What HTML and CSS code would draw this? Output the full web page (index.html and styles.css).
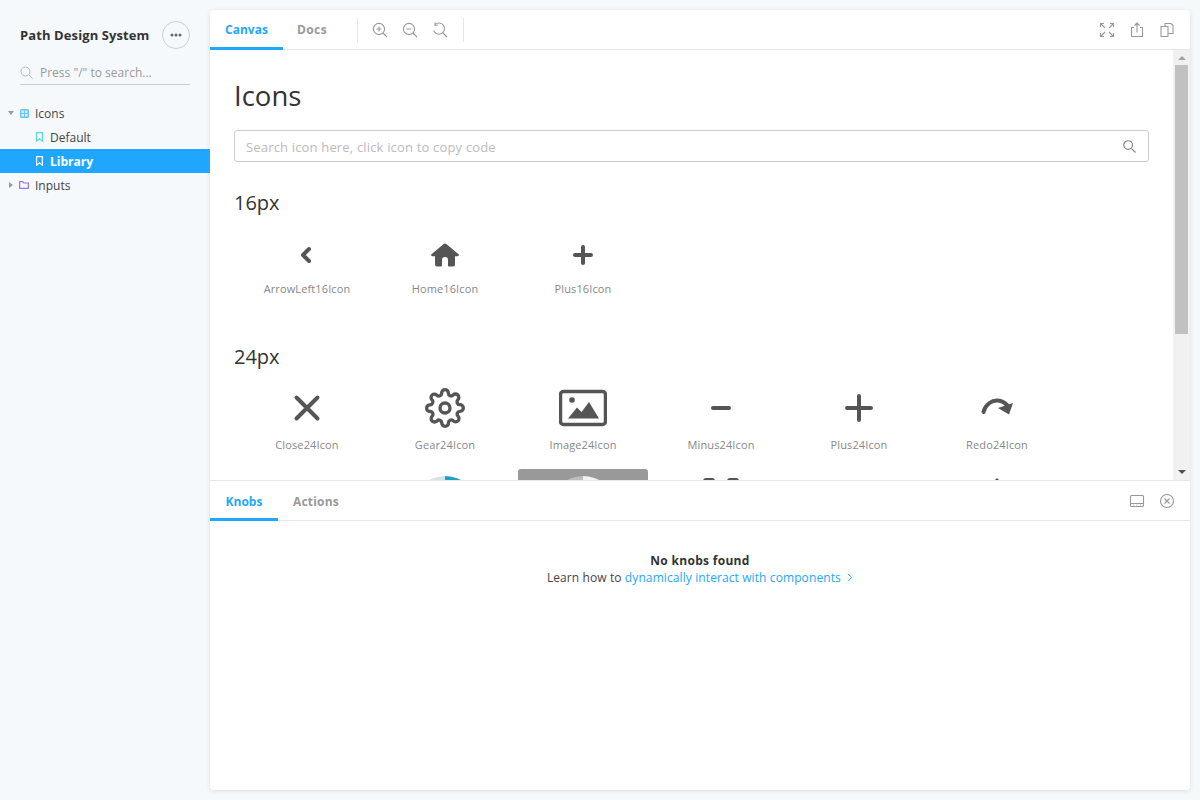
FILE: index.html
```html
<!DOCTYPE html>
<html lang="en">
<head>
    <meta charset="UTF-8">
    <meta name="viewport" content="width=device-width, initial-scale=1.0">
    <title>Path Design System</title>
    <link rel="stylesheet" href="styles.css">
</head>
<body>
    <aside class="sidebar">
        <div class="brand">
            <span class="brand-name">Path Design System</span>
            <button class="menu-btn" aria-label="menu">
                <svg width="12" height="4" viewBox="0 0 12 4"><circle cx="2" cy="2" r="1.5"/><circle cx="6" cy="2" r="1.5"/><circle cx="10" cy="2" r="1.5"/></svg>
            </button>
        </div>
        <div class="side-search">
            <svg width="13" height="13" viewBox="0 0 13 13" fill="none" stroke="#b5b5b5" stroke-width="1"><circle cx="5.5" cy="5.5" r="4.5"/><path d="M9 9l3.5 3.5"/></svg>
            <span>Press "/" to search...</span>
        </div>
        <ul class="tree">
            <li class="tree-item">
                <span class="caret caret-down"></span>
                <svg class="tree-icon" width="9" height="9" viewBox="0 0 9 9"><rect width="9" height="9" rx="1.500" fill="#6cc4f7"/><path d="M1.500 1.500h2.500v2.500h-2.500zM5 1.500h2.500v2.500H5zM1.500 5h2.500v2.500h-2.500zM5 5h2.500v2.500H5z" fill="#d9f0fe"/></svg>
                Icons
            </li>
            <li class="tree-item tree-child">
                <svg class="tree-icon" width="7" height="10" viewBox="0 0 7 10" fill="none" stroke="#5ad8d6" stroke-width="1.200"><path d="M.6.6h5.800v8.600L3.500 6.800.6 9.200z"/></svg>
                Default
            </li>
            <li class="tree-item tree-child is-active">
                <svg class="tree-icon" width="7" height="10" viewBox="0 0 7 10" fill="none" stroke="#fff" stroke-width="1.200"><path d="M.6.6h5.800v8.600L3.500 6.800.6 9.200z"/></svg>
                Library
            </li>
            <li class="tree-item tree-folder">
                <span class="caret caret-right"></span>
                <svg class="tree-icon" width="10" height="8" viewBox="0 0 10 8" fill="none" stroke="#9a78dc" stroke-width="1.200"><path d="M.6.6h3.200l1 1.400h4.600v5.400H.6z"/></svg>
                Inputs
            </li>
        </ul>
    </aside>

    <main class="card">
        <header class="bar">
            <div class="tab is-current tab-canvas">Canvas</div>
            <div class="tab tab-docs">Docs</div>
            <span class="bar-sep"></span>
            <div class="tools">
                <svg width="16" height="16" viewBox="0 0 16 16" class="ico"><circle cx="7" cy="7" r="5.6"/><path d="M11 11l4 4M4.500 7h5M7 4.500v5"/></svg>
                <svg width="16" height="16" viewBox="0 0 16 16" class="ico"><circle cx="7" cy="7" r="5.6"/><path d="M11 11l4 4M4.500 7h5"/></svg>
                <svg width="16" height="16" viewBox="0 0 16 16" class="ico"><path d="M3 2.600A5.600 5.600 0 1 1 1.600 8.400M3 .6v2.600h2.600M11 11l4 4"/></svg>
            </div>
            <span class="bar-sep"></span>
            <div class="bar-right">
                <svg width="16" height="16" viewBox="0 0 16 16" class="ico"><path d="M2 2l4 4M14 2l-4 4M2 14l4-4M14 14l-4-4M1.500 5V1.500H5M11 1.500h3.500V5M1.500 11v3.500H5M11 14.500h3.500V11"/></svg>
                <svg width="16" height="16" viewBox="0 0 16 16" class="ico"><path d="M5 5.500H2.500v9h11v-9H11M8 10.500V1M5.500 3.500L8 1l2.500 2.500"/></svg>
                <svg width="16" height="16" viewBox="0 0 16 16" class="ico"><path d="M2 4.500h7v10H2zM6 4.500V1.500h6l2 2v8h-5"/></svg>
            </div>
        </header>

        <div class="preview">
            <div class="canvas">
                <h1>Icons</h1>
                <div class="icon-search">
                    <span>Search icon here, click icon to copy code</span>
                    <svg width="13" height="13" viewBox="0 0 14 14" fill="none" stroke="#888" stroke-width="1.300"><circle cx="5.500" cy="5.500" r="4.700"/><path d="M9 9l4.500 4.500"/></svg>
                </div>

                <h2>16px</h2>
                <div class="icon-grid grid-small">
                    <div class="tile">
                        <div class="tile-icon"><svg width="32" height="32" viewBox="0 0 32 32" fill="none" stroke="#555" stroke-width="4" stroke-linecap="round" stroke-linejoin="round"><path d="M18 10l-6 6 6 6"/></svg></div>
                        <div class="tile-label">ArrowLeft16Icon</div>
                    </div>
                    <div class="tile">
                        <div class="tile-icon"><svg width="32" height="32" viewBox="0 0 32 32" fill="#555"><path d="M16 4.500a2 2 0 0 1 1.300.5l12 10a1.200 1.200 0 0 1-.8 2.200H26v8.300a2 2 0 0 1-2 2h-4a1 1 0 0 1-1-1V21a3 3 0 0 0-6 0v5.500a1 1 0 0 1-1 1H8a2 2 0 0 1-2-2v-8.300H3.500a1.200 1.200 0 0 1-.8-2.200l12-10a2 2 0 0 1 1.300-.5z"/></svg></div>
                        <div class="tile-label">Home16Icon</div>
                    </div>
                    <div class="tile">
                        <div class="tile-icon"><svg width="32" height="32" viewBox="0 0 32 32" fill="none" stroke="#555" stroke-width="4" stroke-linecap="round"><path d="M16 8v16M8 16h16"/></svg></div>
                        <div class="tile-label">Plus16Icon</div>
                    </div>
                </div>

                <h2>24px</h2>
                <div class="icon-grid grid-large">
                    <div class="tile">
                        <div class="tile-icon"><svg width="48" height="48" viewBox="0 0 48 48" fill="none" stroke="#555" stroke-width="4" stroke-linecap="round"><path d="M13.500 13.500l21 21M34.500 13.500l-21 21"/></svg></div>
                        <div class="tile-label">Close24Icon</div>
                    </div>
                    <div class="tile">
                        <div class="tile-icon"><svg width="40" height="40" viewBox="0 0 24 24" fill="none" stroke="#555" stroke-width="2" stroke-linejoin="round"><circle cx="12" cy="12" r="3"/><path d="M19.400 15a1.650 1.650 0 0 0 .33 1.820l.06.06a2 2 0 0 1 0 2.830 2 2 0 0 1-2.830 0l-.06-.06a1.650 1.650 0 0 0-1.820-.33 1.650 1.650 0 0 0-1 1.510V21a2 2 0 0 1-2 2 2 2 0 0 1-2-2v-.09A1.650 1.650 0 0 0 9 19.400a1.650 1.650 0 0 0-1.820.33l-.06.06a2 2 0 0 1-2.830 0 2 2 0 0 1 0-2.830l.06-.06a1.650 1.650 0 0 0 .33-1.820 1.650 1.650 0 0 0-1.510-1H3a2 2 0 0 1-2-2 2 2 0 0 1 2-2h.09A1.650 1.650 0 0 0 4.600 9a1.650 1.650 0 0 0-.33-1.820l-.06-.06a2 2 0 0 1 0-2.830 2 2 0 0 1 2.830 0l.06.06a1.650 1.650 0 0 0 1.820.33H9a1.650 1.650 0 0 0 1-1.510V3a2 2 0 0 1 2-2 2 2 0 0 1 2 2v.09a1.650 1.650 0 0 0 1 1.510 1.650 1.650 0 0 0 1.820-.33l.06-.06a2 2 0 0 1 2.830 0 2 2 0 0 1 0 2.830l-.06.06a1.650 1.650 0 0 0-.33 1.820V9a1.650 1.650 0 0 0 1.510 1H21a2 2 0 0 1 2 2 2 2 0 0 1-2 2h-.09a1.650 1.650 0 0 0-1.510 1z"/></svg></div>
                        <div class="tile-label">Gear24Icon</div>
                    </div>
                    <div class="tile">
                        <div class="tile-icon"><svg width="48" height="48" viewBox="0 0 48 48"><rect x="1.500" y="7.500" width="45" height="33" rx="3" fill="none" stroke="#555" stroke-width="3.500"/><circle cx="13" cy="16" r="2.800" fill="#555"/><path d="M9 34.500l9-11 4.500 4.500 7.500-10 10 16.500z" fill="#555"/></svg></div>
                        <div class="tile-label">Image24Icon</div>
                    </div>
                    <div class="tile">
                        <div class="tile-icon"><svg width="48" height="48" viewBox="0 0 48 48" fill="none" stroke="#555" stroke-width="4" stroke-linecap="round"><path d="M16 24h16"/></svg></div>
                        <div class="tile-label">Minus24Icon</div>
                    </div>
                    <div class="tile">
                        <div class="tile-icon"><svg width="48" height="48" viewBox="0 0 48 48" fill="none" stroke="#555" stroke-width="4" stroke-linecap="round"><path d="M24 12v24M12 24h24"/></svg></div>
                        <div class="tile-label">Plus24Icon</div>
                    </div>
                    <div class="tile">
                        <div class="tile-icon"><svg width="48" height="48" viewBox="0 0 48 48"><path d="M10.500 28C12.500 20 19 16.500 24 16.500c4 0 7 1.500 10 4.500" fill="none" stroke="#555" stroke-width="4" stroke-linecap="round"/><path d="M40 19l-4 11.500-11-6.500z" fill="#555"/></svg></div>
                        <div class="tile-label">Redo24Icon</div>
                    </div>

                    <div class="tile"></div>
                    <div class="tile">
                        <div class="tile-icon"><svg width="68" height="68" viewBox="0 0 68 68"><circle cx="34" cy="34" r="33" fill="#d6e4e8"/><path d="M34 34V1a33 33 0 0 1 33 33z" fill="#1ea0c4"/></svg></div>
                    </div>
                    <div class="tile is-picked">
                        <div class="tile-icon"><svg width="68" height="68" viewBox="0 0 68 68"><circle cx="34" cy="34" r="33" fill="#bdbdbd"/><path d="M34 34V1a33 33 0 0 1 33 33z" fill="#f2f2f2"/></svg></div>
                    </div>
                    <div class="tile">
                        <div class="tile-icon"><svg width="48" height="62" viewBox="0 0 48 62" fill="#555"><rect x="6" y="0" width="12" height="13" rx="3"/><rect x="30" y="0" width="12" height="13" rx="3"/></svg></div>
                    </div>
                    <div class="tile"></div>
                    <div class="tile">
                        <div class="tile-icon"><svg width="48" height="62" viewBox="0 0 48 62" fill="#555"><path d="M24 0l5 5H19z"/></svg></div>
                    </div>
                </div>
            </div>
            <div class="scrollbar">
                <span class="arrow arrow-up"></span>
                <span class="thumb"></span>
                <span class="track-rest"></span>
                <span class="arrow arrow-down"></span>
            </div>
        </div>

        <section class="addons">
            <header class="bar">
                <div class="tab is-current tab-knobs">Knobs</div>
                <div class="tab tab-actions">Actions</div>
                <div class="bar-right">
                    <svg width="16" height="16" viewBox="0 0 16 16" class="ico"><rect x="1.500" y="2.500" width="13" height="11" rx="1"/><path d="M1.500 10.500h13M4 12h1M7.500 12h1M11 12h1"/></svg>
                    <svg width="16" height="16" viewBox="0 0 16 16" class="ico"><circle cx="8" cy="8" r="6.500"/><path d="M5.500 5.500l5 5M10.500 5.500l-5 5"/></svg>
                </div>
            </header>
            <div class="empty">
                <strong>No knobs found</strong>
                <p>Learn how to <a href="#">dynamically interact with components <svg width="6" height="9" viewBox="0 0 6 9" fill="none" stroke="#1ea7fd" stroke-width="1"><path d="M1 .8l3.700 3.700L1 8.200"/></svg></a></p>
            </div>
        </section>
    </main>
</body>
</html>
```
FILE: styles.css
```css
* {
    box-sizing: border-box;
}
body {
    margin: 0;
    height: 800px;
    overflow: hidden;
    display: flex;
    padding: 10px 10px 10px 0;
    background-color: #f6f9fc;
    font-family: "Open Sans", "Noto Sans", sans-serif;
    color: #333;
}
.sidebar {
    width: 210px;
    flex-shrink: 0;
    padding-top: 11px;
}
.brand {
    display: flex;
    align-items: center;
    justify-content: space-between;
    padding: 0 20px;
    height: 27px;
}
.brand-name {
    font-size: 13px;
    font-weight: 700;
    letter-spacing: 0.1px;
    color: #333;
    white-space: nowrap;
}
.menu-btn {
    width: 28px;
    height: 28px;
    padding: 0;
    border: 1px solid #ccc;
    border-radius: 50%;
    background: transparent;
    display: flex;
    align-items: center;
    justify-content: center;
}
.menu-btn svg {
    fill: #666;
}
.side-search {
    display: flex;
    align-items: center;
    gap: 7px;
    margin: 11px 20px 0;
    height: 26px;
    padding-top: 1px;
    border-bottom: 1px solid #ccc;
    font-size: 12px;
    color: #999;
}
.tree {
    list-style: none;
    margin: 16px 0 0;
    padding: 0;
}
.tree-item {
    position: relative;
    display: flex;
    align-items: center;
    gap: 6px;
    height: 24px;
    padding-left: 20px;
    font-size: 12px;
    color: #444;
}
.tree-child {
    padding-left: 36px;
    gap: 7px;
}
.tree-folder {
    padding-left: 19px;
}
.tree-item.is-active {
    background-color: #1ea7fd;
    color: #fff;
    font-weight: 700;
}
.caret {
    position: absolute;
    left: 8px;
    top: 9px;
    width: 0;
    height: 0;
}
.caret-down {
    border-left: 3.500px solid transparent;
    border-right: 3.500px solid transparent;
    border-top: 4px solid #999;
    top: 10px;
}
.caret-right {
    left: 9px;
    border-top: 3.500px solid transparent;
    border-bottom: 3.500px solid transparent;
    border-left: 4px solid #999;
}
.card {
    flex: 1;
    min-width: 0;
    display: flex;
    flex-direction: column;
    background-color: #fff;
    border-radius: 4px;
    box-shadow: 0 1px 5px rgba(0, 0, 0, 0.1);
    overflow: hidden;
}
.bar {
    display: flex;
    align-items: center;
    height: 40px;
    flex-shrink: 0;
    border-bottom: 1px solid #e6e6e6;
}
.tab {
    height: 40px;
    line-height: 40px;
    text-align: center;
    font-size: 12px;
    font-weight: 700;
    color: #999;
}
.tab.is-current {
    color: #1ea7fd;
    border-bottom: 3px solid #1ea7fd;
}
.tab-canvas {
    width: 73px;
}
.tab-docs {
    width: 60px;
    letter-spacing: 0.4px;
    margin-left: -1px;
    margin-right: 1px;
}
.tab-knobs {
    width: 68px;
    line-height: 42px;
}
.tab-actions {
    width: 76px;
    line-height: 42px;
    letter-spacing: 0.2px;
}
.bar-sep {
    width: 1px;
    height: 24px;
    margin-left: 14px;
    background-color: #e6e6e6;
}
.tools {
    display: flex;
    gap: 14px;
    margin-left: 14px;
    margin-right: 1px;
}
.bar-right {
    display: flex;
    gap: 14px;
    margin-left: auto;
    padding-right: 15px;
}
.ico {
    fill: none;
    stroke: #999;
    stroke-width: 1.1;
}
.preview {
    display: flex;
    height: 431px;
    flex-shrink: 0;
    overflow: hidden;
    border-bottom: 1px solid #e6e6e6;
}
.canvas {
    flex: 1;
    min-width: 0;
    padding: 27px 24px 0;
}
.canvas h1 {
    margin: 0;
    font-size: 27.5px;
    font-weight: 400;
    line-height: 38px;
    color: #333;
}
.icon-search {
    display: flex;
    align-items: center;
    justify-content: space-between;
    height: 32px;
    margin-top: 15px;
    padding: 1px 12px 0 11px;
    border: 1px solid #ccc;
    border-radius: 3px;
    font-size: 13px;
    letter-spacing: 0.17px;
    color: #bbb;
}
.canvas h2 {
    margin: 26px 0 0;
    font-size: 20px;
    font-weight: 400;
    line-height: 30px;
    color: #333;
}
.icon-grid {
    display: grid;
    grid-template-columns: repeat(6, 130px);
    column-gap: 8px;
    row-gap: 8px;
    padding-left: 8px;
    margin-top: 5px;
}
.grid-large {
    margin-top: -4px;
}
.tile {
    height: 93px;
    padding-top: 16px;
    border-radius: 3px;
}
.tile.is-picked {
    background-color: #999;
}
.tile-icon {
    height: 48px;
    display: flex;
    align-items: center;
    justify-content: center;
}
.grid-small .tile-icon {
    height: 32px;
}
.tile-label {
    margin-top: 4px;
    height: 18px;
    line-height: 18px;
    text-align: center;
    font-size: 11px;
    letter-spacing: 0.12px;
    color: #888;
}
.grid-small .tile-label {
    margin-top: 9px;
}
.scrollbar {
    width: 17px;
    flex-shrink: 0;
    display: flex;
    flex-direction: column;
    align-items: center;
    background-color: #f1f1f1;
}
.arrow {
    width: 0;
    height: 0;
    flex-shrink: 0;
    border-left: 4px solid transparent;
    border-right: 4px solid transparent;
}
.arrow-up {
    margin: 6px 0 5px;
    border-bottom: 4px solid #a3a3a3;
}
.arrow-down {
    margin: 5px 0 6px;
    border-top: 4px solid #505050;
}
.thumb {
    width: 13px;
    height: 269px;
    flex-shrink: 0;
    background-color: #c1c1c1;
}
.track-rest {
    flex: 1;
}
.addons {
    flex: 1;
    min-height: 0;
}
.empty {
    padding-top: 31px;
    text-align: center;
    font-size: 12px;
    letter-spacing: 0.1px;
    line-height: 17px;
    color: #444;
}
.empty strong {
    letter-spacing: 0.3px;
    color: #333;
}
.empty p {
    margin: 0;
}
.empty a {
    color: #1ea7fd;
    text-decoration: none;
}
.empty svg {
    margin-left: 3px;
}
```
